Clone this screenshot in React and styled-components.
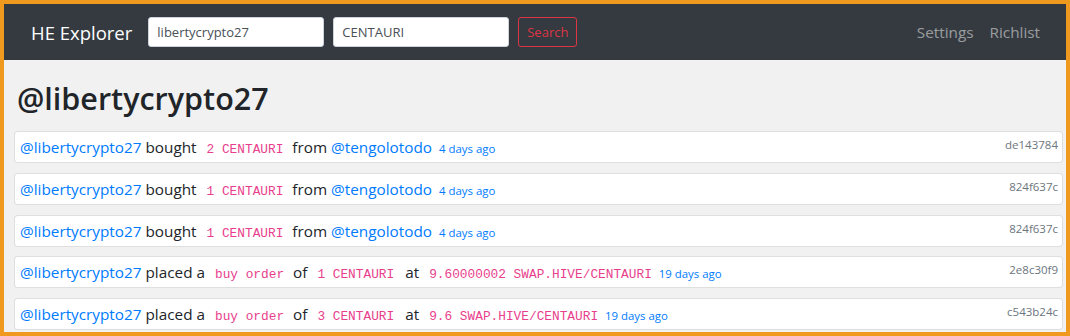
import React from 'react';
import styled, { createGlobalStyle } from 'styled-components';

const GlobalStyle = createGlobalStyle`
  html, body {
    margin: 0;
    padding: 0;
    background: #f1f1f1;
  }
  * {
    box-sizing: border-box;
  }
`;

const Frame = styled.div`
  width: 1070px;
  height: 336px;
  border: 4px solid #ef9a1f;
  background: #f1f1f1;
  overflow: hidden;
  font-family: "Open Sans", "Noto Sans", sans-serif;
  color: #212529;
`;

const Navbar = styled.nav`
  height: 56px;
  background: #343a40;
  display: flex;
  align-items: center;
  padding: 0 18px 0 26px;
`;

const Brand = styled.a`
  color: #fff;
  font-size: 18.5px;
  text-decoration: none;
  margin-right: 16px;
  padding-left: 1px;
`;

const SearchForm = styled.form`
  display: flex;
  align-items: center;
  gap: 9px;
`;

const Input = styled.input`
  width: 176px;
  height: 30px;
  padding: 0 8px;
  border: 1px solid #ced4da;
  border-radius: 3px;
  background: #fff;
  color: #495057;
  font-family: inherit;
  font-size: 13px;
  outline: none;
`;

const OutlineButton = styled.button`
  height: 30px;
  width: 59px;
  padding: 0;
  background: transparent;
  border: 1px solid #dc3545;
  border-radius: 3px;
  color: #dc3545;
  font-family: inherit;
  font-size: 13px;
`;

const NavLinks = styled.ul`
  list-style: none;
  margin: 0 0 0 auto;
  padding: 0;
  display: flex;
`;

const NavLink = styled.a`
  display: block;
  padding: 8px;
  color: rgba(255, 255, 255, 0.5);
  font-size: 15.3px;
  text-decoration: none;
`;

const Main = styled.main`
  padding: 19px 3px 0 10px;
`;

const Title = styled.h1`
  margin: 0 0 14px 3px;
  font-size: 30.5px;
  font-weight: 600;
  line-height: 38px;
`;

const Card = styled.div`
  display: flex;
  justify-content: space-between;
  align-items: flex-start;
  height: 32px;
  margin-bottom: 9.75px;
  padding: 3px 4px 0 5px;
  background: #fff;
  border: 1px solid rgba(0, 0, 0, 0.125);
  border-radius: 4px;
`;

const Line = styled.div`
  font-size: 15.3px;
  line-height: 24px;
  white-space: nowrap;
`;

const UserLink = styled.a`
  color: #007bff;
  text-decoration: none;
`;

const Code = styled.code`
  font-family: "Liberation Mono", "DejaVu Sans Mono", monospace;
  font-size: 12.8px;
  color: #e83e8c;
  padding: 0 ${(p) => p.$pr ?? 5}px 0 6px;
`;

const Ago = styled.small`
  color: #007bff;
  font-size: 11.4px;
  margin-left: 3px;
`;

const Hash = styled.span`
  color: #6c757d;
  font-size: 11.5px;
  line-height: 20px;
`;

const rows = [
  { kind: 'buy', qty: 2, from: '@tengolotodo', ago: '4 days ago', hash: 'de143784' },
  { kind: 'buy', qty: 1, from: '@tengolotodo', ago: '4 days ago', hash: '824f637c' },
  { kind: 'buy', qty: 1, from: '@tengolotodo', ago: '4 days ago', hash: '824f637c' },
  { kind: 'order', qty: 1, price: '9.60000002', ago: '19 days ago', hash: '2e8c30f9' },
  { kind: 'order', qty: 3, price: '9.6', ago: '19 days ago', hash: 'c543b24c' },
];

const user = 'libertycrypto27';
const token = 'CENTAURI';

const Trade = ({ row }) => (
  <Card>
    {row.kind === 'buy' ? (
      <Line>
        <UserLink href="#">@{user}</UserLink> bought{' '}
        <Code>{row.qty} {token}</Code>{' '}
        from <UserLink href="#">{row.from}</UserLink>{' '}
        <Ago>{row.ago}</Ago>
      </Line>
    ) : (
      <Line>
        <UserLink href="#">@{user}</UserLink> placed a{' '}
        <Code>buy order</Code> of{' '}
        <Code $pr={7}>{row.qty} {token}</Code>{' '}
        at <Code $pr={0}>{row.price} SWAP.HIVE/{token}</Code>{' '}
        <Ago>{row.ago}</Ago>
      </Line>
    )}
    <Hash>{row.hash}</Hash>
  </Card>
);

export default function App() {
  return (
    <Frame>
      <GlobalStyle />
      <Navbar>
        <Brand href="#">HE Explorer</Brand>
        <SearchForm onSubmit={(e) => e.preventDefault()}>
          <Input defaultValue={user} />
          <Input defaultValue={token} />
          <OutlineButton type="submit">Search</OutlineButton>
        </SearchForm>
        <NavLinks>
          <li><NavLink href="#">Settings</NavLink></li>
          <li><NavLink href="#">Richlist</NavLink></li>
        </NavLinks>
      </Navbar>
      <Main>
        <Title>@{user}</Title>
        {rows.map((row, i) => (
          <Trade key={i} row={row} />
        ))}
      </Main>
    </Frame>
  );
}
